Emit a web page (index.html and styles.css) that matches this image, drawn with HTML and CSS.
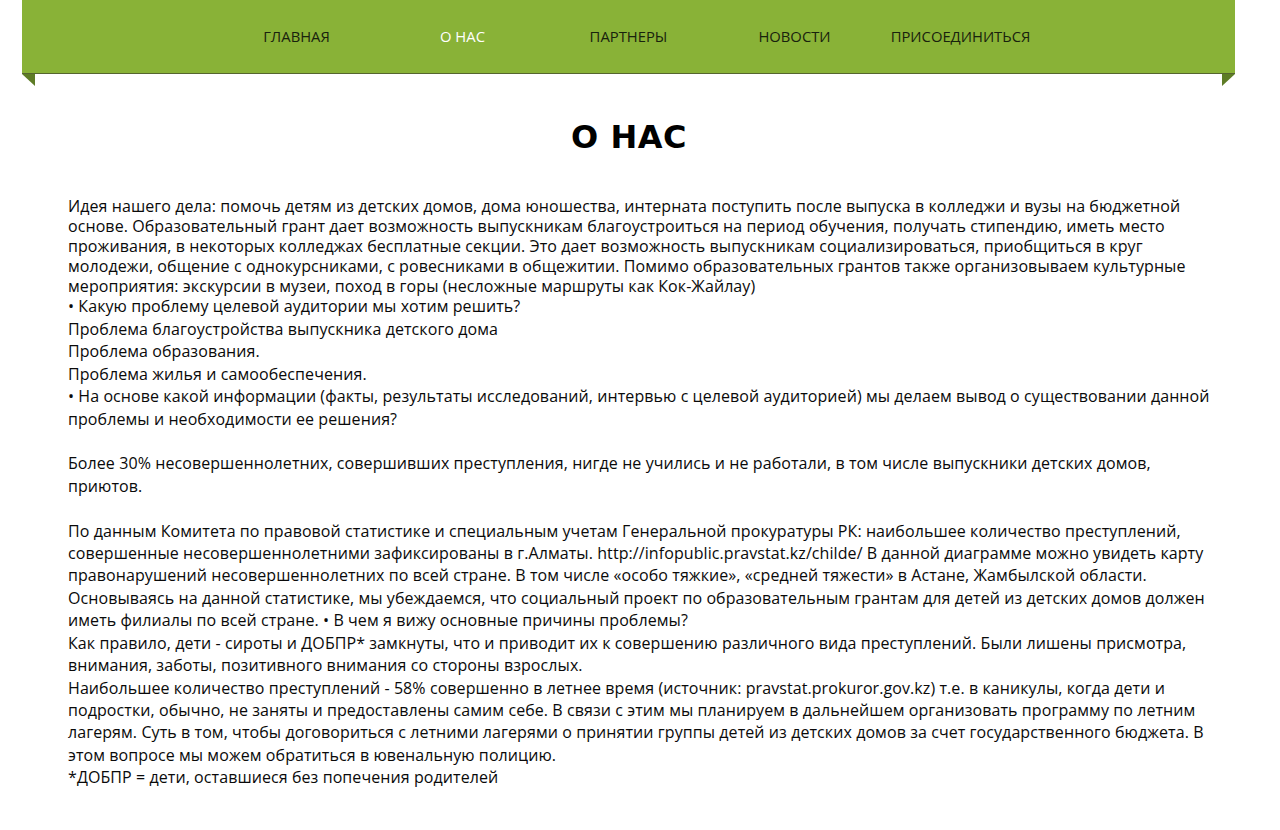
FILE: index.html
```html
<!DOCTYPE html>
<html lang="ru">
<head>
<meta charset="utf-8">
<title>О нас</title>
<link rel="stylesheet" href="styles.css">
</head>
<body>
<header class="ribbon">
  <nav class="nav">
    <a class="nav-item" href="#">Главная</a>
    <a class="nav-item active" href="#">О нас</a>
    <a class="nav-item" href="#">Партнеры</a>
    <a class="nav-item" href="#">Новости</a>
    <a class="nav-item" href="#">Присоединиться</a>
  </nav>
</header>
<main class="content">
  <h1 class="title">О НАС</h1>
  <div class="intro">Идея нашего дела: помочь детям из детских домов, дома юношества, интерната поступить после выпуска в колледжи и вузы на бюджетной основе. Образовательный грант дает возможность выпускникам благоустроиться на период обучения, получать стипендию, иметь место проживания, в некоторых колледжах бесплатные секции. Это дает возможность выпускникам социализироваться, приобщиться в круг молодежи, общение с однокурсниками, с ровесниками в общежитии. Помимо образовательных грантов также организовываем культурные мероприятия: экскурсии в музеи, поход в горы (несложные маршруты как Кок-Жайлау)<br>• Какую проблему целевой аудитории мы хотим решить?</div>
  <div class="body">Проблема благоустройства выпускника детского дома<br>Проблема образования.<br>Проблема жилья и самообеспечения.<br>• На основе какой информации (факты, результаты исследований, интервью с целевой аудиторией) мы делаем вывод о существовании данной проблемы и необходимости ее решения?<br><br>Более 30% несовершеннолетних, совершивших преступления, нигде не учились и не работали, в том числе выпускники детских домов, приютов.<br><br>По данным Комитета по правовой статистике и специальным учетам Генеральной прокуратуры РК: наибольшее количество преступлений, совершенные несовершеннолетними зафиксированы в г.Алматы. http://infopublic.pravstat.kz/childe/ В данной диаграмме можно увидеть карту правонарушений несовершеннолетних по всей стране. В том числе «особо тяжкие», «средней тяжести» в Астане, Жамбылской области. Основываясь на данной статистике, мы убеждаемся, что социальный проект по образовательным грантам для детей из детских домов должен иметь филиалы по всей стране. • В чем я вижу основные причины проблемы?<br>Как правило, дети - сироты и ДОБПР* замкнуты, что и приводит их к совершению различного вида преступлений. Были лишены присмотра, внимания, заботы, позитивного внимания со стороны взрослых.<br>Наибольшее количество преступлений - 58% совершенно в летнее время (источник: pravstat.prokuror.gov.kz) т.е. в каникулы, когда дети и подростки, обычно, не заняты и предоставлены самим себе. В связи с этим мы планируем в дальнейшем организовать программу по летним лагерям. Суть в том, чтобы договориться с летними лагерями о принятии группы детей из детских домов за счет государственного бюджета. В этом вопросе мы можем обратиться в ювенальную полицию.<br>*ДОБПР = дети, оставшиеся без попечения родителей</div>
</main>
</body>
</html>
```

FILE: styles.css
```css
html, body {
  margin: 0;
  padding: 0;
  background: #ffffff;
}

body {
  font-family: "Open Sans", "DejaVu Sans", sans-serif;
  color: #0a0a0a;
}

.ribbon {
  position: relative;
  box-sizing: border-box;
  width: 1213px;
  height: 74px;
  margin-left: 22px;
  padding-bottom: 2px;
  background: #89b237;
  border-bottom: 1px solid #55652f;
  display: flex;
  justify-content: center;
  align-items: center;
}

.ribbon::before,
.ribbon::after {
  content: "";
  position: absolute;
  top: 74px;
  width: 0;
  height: 0;
  border-top: 12px solid #5e7c26;
}

.ribbon::before {
  left: 0;
  border-left: 13px solid transparent;
}

.ribbon::after {
  right: 0;
  border-right: 13px solid transparent;
}

.nav {
  display: flex;
}

.nav-item {
  width: 166px;
  text-align: center;
  font-size: 14.8px;
  line-height: 20px;
  text-transform: uppercase;
  text-decoration: none;
  color: #18220d;
}

.nav-item.active {
  color: #ffffff;
}

.content {
  width: 1144px;
  margin: 0 auto;
}

.title {
  margin: 44px 0 38px;
  padding-right: 22px;
  text-align: center;
  font-family: "Comic Sans MS", "Comic Neue", "DejaVu Sans", sans-serif;
  font-weight: bold;
  font-size: 32px;
  line-height: 40px;
  letter-spacing: 0.5px;
  color: #000000;
}

.intro {
  font-size: 16px;
  line-height: 20px;
  letter-spacing: 0.08px;
}

.body {
  font-size: 16px;
  line-height: 22.4px;
  margin-top: 2px;
  letter-spacing: 0.08px;
}
```
